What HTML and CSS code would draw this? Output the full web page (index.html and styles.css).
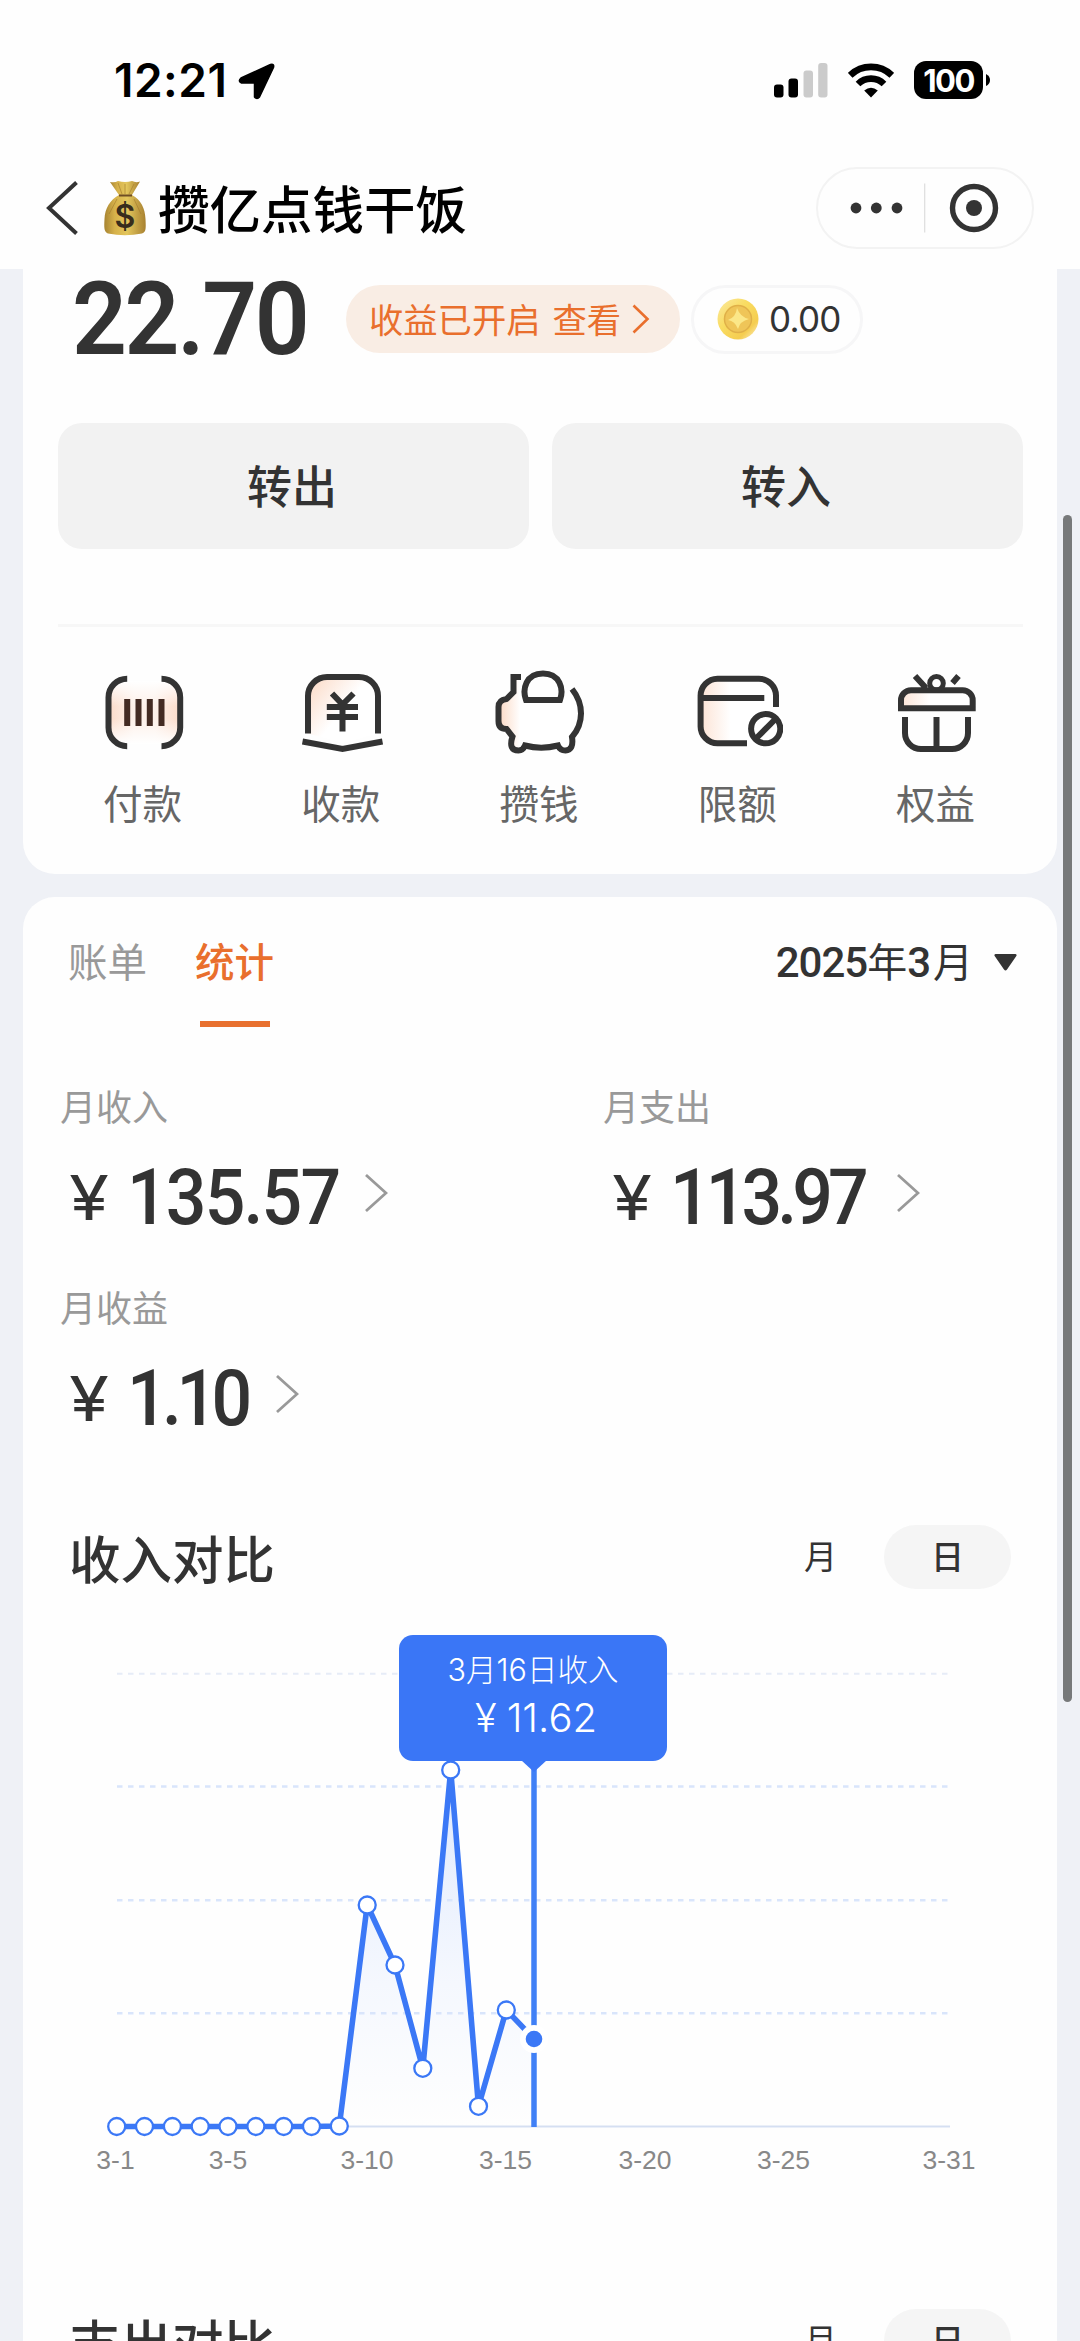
FILE: index.html
```html
<!DOCTYPE html>
<html lang="zh-CN">
<head>
<meta charset="utf-8">
<title>攒亿点钱干饭</title>
<link rel="stylesheet" href="styles.css">
</head>
<body>
<div class="screen">
  <header class="top">
    <div class="status">
      <span class="clock">12:21</span>
      <svg class="loc" width="37" height="37" viewBox="0 0 37 37"><path d="M3 15 32.500 1.500Q36.500 .5 35.500 4.500L21.500 34Q19 37 16.500 34V20H3.500Q-.5 18.500 3 15Z" stroke="#000" stroke-width="1.500" stroke-linejoin="round"/></svg>
      <svg class="signal" width="54" height="35" viewBox="0 0 54 35"><rect x="0" y="21.500" width="9.500" height="13" rx="3"/><rect x="14.500" y="15.500" width="9.500" height="19" rx="3"/><rect x="29.500" y="7.500" width="9.500" height="27" rx="3" fill="#cbcbcb"/><rect x="44.200" y="0" width="9.300" height="34.500" rx="3" fill="#cbcbcb"/></svg>
      <svg class="wifi" width="46" height="35" viewBox="0 0 46 35"><g fill="none" stroke="#000" stroke-width="6.600"><path d="M2.200 12.300A30 30 0 0 1 43.800 12.300"/><path d="M10 21A18.500 18.500 0 0 1 36 21"/></g><path d="M23 34.500 16.200 27.500Q23 21.800 29.800 27.500Z"/></svg>
      <span class="battery">100</span><svg class="nub" width="4" height="12" viewBox="0 0 4 12"><path d="M0 0Q4 2 4 6Q4 10 0 12Z"/></svg>
    </div>
    <nav class="nav">
      <svg class="back" width="32" height="54" viewBox="0 0 32 54"><path d="M30.500 1.500 3 27 30.500 52.500" fill="none" stroke="#333" stroke-width="4"/></svg>
      <svg class="bag" width="42" height="56" viewBox="0 0 42 56">
        <defs><linearGradient id="gold" x1="0" x2="1"><stop offset="0" stop-color="#a78432"/><stop offset=".25" stop-color="#d6b14a"/><stop offset=".55" stop-color="#e3c65c"/><stop offset="1" stop-color="#a88131"/></linearGradient></defs>
        <path d="M6 2Q11 3 14 1Q21 3 28 1Q32 3 36 1.500L28 15H15Z" fill="url(#gold)"/>
        <path d="M15 15H28C37 20 41 28 41.500 39C42 49 42 52 38 53.500Q21 57 4 53.500C0 52 0 48 .5 39C1 28 6 20 15 15Z" fill="url(#gold)"/>
        <path d="M15 15.500H28" stroke="#6e4d24" stroke-width="2"/>
        <path d="M14 3 18 14M21 4V14M30 4 25 14M13 19 5 34M30 19 37 34" stroke="#a17a2b" stroke-width="1" fill="none" opacity=".6"/>
        <text x="21" y="48" text-anchor="middle" class="dollar">$</text>
      </svg>
      <h1 class="title">攒亿点钱干饭</h1>
      <div class="capsule">
        <svg width="214" height="78" viewBox="0 0 214 78"><g fill="#333"><circle cx="38" cy="39" r="5.400"/><circle cx="58.300" cy="39" r="5.400"/><circle cx="79" cy="39" r="5.400"/><circle cx="156" cy="39" r="8"/></g><path d="M106.700 14.500V63.500" stroke="#ddd" stroke-width="1.200"/><circle cx="156" cy="39" r="21.500" fill="none" stroke="#333" stroke-width="5.400"/></svg>
      </div>
    </nav>
  </header>

  <section class="card account">
    <div class="balance">
      <span class="total">22.70</span>
      <a class="earn"><span>收益已开启</span><span>查看</span><svg width="18" height="30" viewBox="0 0 18 30"><path d="M1.500 1.500 15.500 15 1.500 28.500" fill="none" stroke="#e96f2d" stroke-width="2.600"/></svg></a>
      <a class="coin">
        <svg width="42" height="42" viewBox="0 0 42 42"><defs><linearGradient id="coinface" x1="0" y1="0" x2="1" y2="1"><stop offset="0" stop-color="#fbe9a0"/><stop offset=".4" stop-color="#f9dc62"/><stop offset=".75" stop-color="#f5cd50"/><stop offset="1" stop-color="#fdf3cf"/></linearGradient></defs><circle cx="21" cy="21" r="20.500" fill="url(#coinface)"/><circle cx="21" cy="21" r="13.500" fill="#efc558" stroke="#e0b048" stroke-width="1.500"/><path d="M20 10Q23 19 32 21Q23 23 21 31Q18 23 11 22Q19 19 20 10Z" fill="#fbe788"/></svg>
        <span>0.00</span>
      </a>
    </div>
    <div class="actions"><button>转出</button><button>转入</button></div>
    <hr class="rule">
    <ul class="services">
      <li>
        <svg class="ico" viewBox="0 0 90 90"><defs><linearGradient id="pg" x1="0" x2="1"><stop offset="0" stop-color="#fbdccb"/><stop offset=".35" stop-color="#fdf1ea"/><stop offset=".65" stop-color="#fdf1ea"/><stop offset="1" stop-color="#fbdccb"/></linearGradient><linearGradient id="pm" x1="0" y1="0" x2="0" y2="1"><stop offset="0" stop-color="#fff"/><stop offset=".4" stop-color="#fff" stop-opacity="0"/><stop offset=".6" stop-color="#fff" stop-opacity="0"/><stop offset="1" stop-color="#fff"/></linearGradient></defs><rect x="11" y="14" width="69" height="63" rx="14" fill="url(#pg)" stroke="none"/><rect x="11" y="14" width="69" height="63" rx="14" fill="url(#pm)" stroke="none"/><path d="M28.200 11.700A18.700 18.700 0 0 0 9.500 30.400V60.500A18.700 18.700 0 0 0 28.200 79.200M62.500 11.700A18.700 18.700 0 0 1 81.200 30.400V60.500A18.700 18.700 0 0 1 62.500 79.200"/><path d="M28.200 32V59M39.500 32V59M50.800 32V59M62.500 32V59" stroke="#432b23"/></svg>
        <span>付款</span>
      </li>
      <li>
        <svg class="ico" viewBox="0 0 90 90"><defs><linearGradient id="rg" x1="0" y1="0" x2=".8" y2=".6"><stop offset="0" stop-color="#fbd8c3"/><stop offset=".7" stop-color="#fff"/></linearGradient></defs><path d="M11 66.500V29A19 19 0 0 1 30 10H62A19 19 0 0 1 81 29V66.500L46 76Z" fill="url(#rg)" stroke="none"/><path d="M11 66.500V29A19 19 0 0 1 30 10H62A19 19 0 0 1 81 29V66.500M5.500 74.500 45.500 82 85.500 74.500"/><path d="M35 26.500 45.500 37.500 56.500 26.500M29.800 40H61M29.800 50H61M45.500 37V64.500"/></svg>
        <span>收款</span>
      </li>
      <li>
        <svg class="ico" viewBox="0 0 90 90"><defs><linearGradient id="sg" x1="0" x2="1"><stop offset="0" stop-color="#fbd8c3"/><stop offset=".3" stop-color="#fff"/></linearGradient></defs><path d="M18 11V25L11 32Q3.500 33 3.500 40V55Q3.500 62 11 62.500L17 70V82H76V22L64 34H30V11Z" fill="url(#sg)" stroke="none"/><path d="M26 10H18.500V25L11.500 32Q3.500 33 3.500 40V54Q3.500 62 11.500 62L17.500 69.500Q13 83.500 23.500 83.500Q28 83.500 30 78.500Q46 83 63 78.500Q65 83.500 70.500 83.500Q79 83 77 70C89 56 89 37 77 22M31 33C27 22 31 6.500 48 6.500S69 22 65 33Z"/></svg>
        <span>攒钱</span>
      </li>
      <li>
        <svg class="ico" viewBox="0 0 90 90"><defs><linearGradient id="lg" x1="0" x2="1"><stop offset="0" stop-color="#fce4d6"/><stop offset=".4" stop-color="#fff"/></linearGradient></defs><rect x="8" y="12" width="74" height="64" rx="16" fill="url(#lg)" stroke="none"/><path d="M83 40V29A17 17 0 0 0 66 11.700H24.500A17 17 0 0 0 7.600 29V59A17 17 0 0 0 24.500 76.300H54M8 31H71.300"/><circle cx="72.700" cy="61.700" r="20" fill="#fff" stroke="none"/><circle cx="72.700" cy="61.700" r="14.600"/><path d="M62.500 72 83 51.500"/></svg>
        <span>限额</span>
      </li>
      <li>
        <svg class="ico" viewBox="0 0 90 90"><rect x="10" y="23" width="71" height="18" rx="8" fill="url(#lg)" stroke="none"/><path d="M10 41.300V33.300A10 10 0 0 1 20 23.300H71.700A10 10 0 0 1 81.700 33.300V41.300ZM14 50V66A16 16 0 0 0 30 82H61A16 16 0 0 0 77 66V50M45.500 50V82M24 9 35 21M67.500 9 61.500 16"/><circle cx="45.500" cy="16.300" r="6.800" stroke-width="5"/></svg>
        <span>权益</span>
      </li>
    </ul>
  </section>

  <section class="card report">
    <div class="tabs">
      <a class="tab">账单</a>
      <a class="tab active">统计</a>
      <div class="month"><b>2025</b><span>年</span><b>3</b><span class="yue">月</span><svg width="23" height="17" viewBox="0 0 23 17"><path d="M1.500 0H21.500Q23.500 .5 22 2.500L13 15.500Q11.500 17.500 10 15.500L1 2.500Q-.5 .5 1.500 0Z" fill="#333"/></svg></div>
    </div>
    <div class="stats">
      <div class="stat income"><p>月收入</p><div class="amount"><i>¥</i><b>135.57</b><svg class="more" viewBox="0 0 24 40"><path d="M2 2 22 20 2 38"/></svg></div></div>
      <div class="stat expense"><p>月支出</p><div class="amount"><i>¥</i><b>113.97</b><svg class="more" viewBox="0 0 24 40"><path d="M2 2 22 20 2 38"/></svg></div></div>
      <div class="stat profit"><p>月收益</p><div class="amount"><i>¥</i><b>1.10</b><svg class="more" viewBox="0 0 24 40"><path d="M2 2 22 20 2 38"/></svg></div></div>
    </div>
    <div class="heading"><h2>收入对比</h2><span class="opt">月</span><span class="opt on">日</span></div>
    <div class="chart">
      <svg width="1034" height="720" viewBox="0 0 1034 720">
        <defs><linearGradient id="area" x1="0" y1="0" x2="0" y2="1"><stop offset="0" stop-color="#dfe9fd"/><stop offset=".6" stop-color="#f5f8fe"/><stop offset="1" stop-color="#fefefe"/></linearGradient></defs>
        <path d="M316.300 537 344.200 316 372 376 399.800 479.300 427.700 181 455.500 517.300 483.300 421 511.100 450V537Z" fill="url(#area)"/>
        <g stroke="#d9e5fb" stroke-width="2.500" stroke-dasharray="5.500 5.500"><path d="M94 84.700H925" stroke="#e6ecf7" stroke-width="2"/><path d="M94 197.500H925"/><path d="M94 311.300H925"/><path d="M94 424.300H925"/></g>
        <path d="M94 537.500H927" stroke="#d5dff2" stroke-width="2"/>
        <path d="M511 178V538" stroke="#4080f6" stroke-width="5.500"/>
        <path d="M93.700 537.500H288.500L316.300 537 344.200 316 372 376 399.800 479.300 427.700 181 455.500 517.300 483.300 421 511.100 450" fill="none" stroke="#3b78f6" stroke-width="5.600" stroke-linejoin="round"/>
        <g fill="#fff" stroke="#3b78f6" stroke-width="2.300"><circle cx="93.700" cy="537.500" r="8.500"/><circle cx="121.500" cy="537.500" r="8.500"/><circle cx="149.400" cy="537.500" r="8.500"/><circle cx="177.200" cy="537.500" r="8.500"/><circle cx="205" cy="537.500" r="8.500"/><circle cx="232.900" cy="537.500" r="8.500"/><circle cx="260.700" cy="537.500" r="8.500"/><circle cx="288.500" cy="537.500" r="8.500"/><circle cx="316.300" cy="537" r="8.500"/><circle cx="344.200" cy="316" r="8.500"/><circle cx="372" cy="376" r="8.500"/><circle cx="399.800" cy="479.300" r="8.500"/><circle cx="427.700" cy="181" r="8.500"/><circle cx="455.500" cy="517.300" r="8.500"/><circle cx="483.300" cy="421" r="8.500"/></g>
        <circle cx="511" cy="450" r="14" fill="#fff"/><circle cx="511" cy="450" r="8.300" fill="#3b78f6"/>
        <g class="axis"><text x="92.500" y="580">3-1</text><text x="205" y="580">3-5</text><text x="344" y="580">3-10</text><text x="482.500" y="580">3-15</text><text x="622" y="580">3-20</text><text x="760.500" y="580">3-25</text><text x="926" y="580">3-31</text></g>
      </svg>
      <div class="tip"><span>3月16日收入</span><strong><i>¥</i>11.62</strong></div>
    </div>
    <div class="heading"><h2>支出对比</h2><span class="opt">月</span><span class="opt on">日</span></div>
  </section>
  <div class="scrollbar"></div>
</div>
</body>
</html>
```
FILE: styles.css
```css
* { box-sizing: border-box; margin: 0; padding: 0; }
body { background: #eff1f6; color: #333; font-family: "Noto Sans CJK SC", sans-serif; }
.screen { position: relative; width: 1080px; height: 2341px; overflow: hidden; }
svg { display: block; flex: none; }
i { font-style: normal; }
.top { background: #fefefe; height: 269px; }
.status { height: 146px; padding: 14px 90px 0 114px; display: flex; align-items: center; color: #000; }
.clock { width: 124px; font: 600 46px/50px Inter, sans-serif; letter-spacing: .5px; white-space: nowrap; }
.loc { margin-top: 2px; }
.signal { margin-left: auto; margin-right: 20px; }
.wifi { margin-right: 20px; }
.battery { width: 69px; height: 38px; border-radius: 12px; background: #000; color: #fff; font: 700 31px/39px Inter, sans-serif; letter-spacing: -1.5px; text-align: center; }
.nub { margin-left: 3px; }
.nav { height: 123px; padding: 0 46px; display: flex; align-items: center; }
.bag { margin-left: 26px; }
.dollar { font: 600 32px Inter, sans-serif; fill: #382d1c; }
.title { margin: -2px 0 0 12px; font-size: 51.500px; line-height: 60px; font-weight: 500; color: #000; }
.capsule { margin-left: auto; border: 2px solid #f3f3f3; border-radius: 41px; }

.card { margin: 0 23px; background: #fefefe; }
.account { height: 605px; border-radius: 0 0 32px 32px; padding: 0 34.500px; }
.balance { height: 100px; display: flex; align-items: center; }
.total { width: 274.500px; margin-left: 14px; font: 600 102px/100px Roboto, sans-serif; letter-spacing: -2.500px; transform: scaleX(.943); transform-origin: left; }
.earn { width: 334px; height: 68px; padding-left: 23px; border-radius: 34px; background: #f9ede4; color: #e96f2d; display: flex; align-items: center; gap: 12px; font-size: 34.300px; line-height: 40px; }
.earn span { margin-top: -3px; }
.earn svg { margin-left: -1px; }
.coin { margin-left: 11px; width: 172px; height: 69px; padding-left: 23px; border: 3px solid #f6f6f7; border-radius: 35px; display: flex; align-items: center; gap: 10px; font: 400 35px/40px Inter, sans-serif; letter-spacing: -.7px; }
.actions { margin-top: 54px; display: grid; grid-template-columns: 1fr 1fr; gap: 23px; }
.actions button { height: 126px; border: 0; border-radius: 24px; background: #f2f2f2; color: #333; font: 500 45px/60px "Noto Sans CJK SC", sans-serif; padding: 0 2px 2px 0; }
.rule { margin-top: 75px; border: 0; height: 3px; background: #f7f7f7; }
.services { list-style: none; margin: 40px -13px 0; display: grid; grid-template-columns: repeat(5, 1fr); justify-items: center; font-size: 39.500px; line-height: 44px; color: #666; }
.services span { display: block; margin: 23px 2px 0 0; text-align: center; }
.ico { width: 90px; height: 90px; fill: none; stroke: #333; stroke-width: 6; }

.report { margin-top: 23px; height: 1600px; border-radius: 32px 32px 0 0; }
.tabs { height: 130px; padding: 41px 40px 0 45px; display: flex; gap: 48px; }
.tab { font-size: 39.500px; line-height: 44px; color: #999; }
.tab.active { color: #e96f2d; font-weight: 500; }
.tab.active::after { content: ""; display: block; width: 70px; height: 6px; margin: 39px auto 0; background: #e8702f; }
.month { margin-left: auto; height: 44px; display: flex; align-items: center; font-size: 40px; line-height: 44px; }
.month b { font: 500 42px/44px Roboto, sans-serif; letter-spacing: -1px; margin-top: 6px; }
.month .yue { margin-left: 3px; }
.month svg { margin-left: 21px; margin-top: 4px; }
.stats { margin-top: 56px; padding-left: 37px; display: grid; grid-template-columns: 543px 1fr; row-gap: 52px; }
.stat p { font-size: 36px; line-height: 44px; color: #999; }
.amount { height: 70px; margin-top: 36px; margin-bottom: -1px; display: flex; align-items: center; }
.amount i { width: 67px; padding-left: 8px; font: 400 62px/70px Inter, sans-serif; transform: scaleX(1.16); transform-origin: left; }
.amount b { font: 500 77px/70px Roboto, sans-serif; transform: scaleX(.93); transform-origin: left; white-space: nowrap; }
.income b { width: 211px; letter-spacing: -2px; }
.expense b { width: 200px; letter-spacing: -5.300px; }
.profit b { width: 122px; letter-spacing: -6px; }
.more { width: 24px; height: 40px; margin: -10px 0 0 26px; fill: none; stroke: #999; stroke-width: 2.800; }
.heading { height: 64px; padding: 0 46px; display: flex; align-items: center; }
.stats + .heading { margin-top: 92px; }
.heading h2 { margin-right: auto; font-size: 51.500px; line-height: 60px; font-weight: 500; }
.opt { width: 127px; height: 64px; border-radius: 32px; text-align: center; font-size: 33px; line-height: 60px; }
.opt.on { background: #f5f5f5; font-weight: 500; }
.chart { position: relative; height: 720px; }
.axis { font: 26.500px "Liberation Sans", sans-serif; fill: #888; text-anchor: middle; }
.tip { position: absolute; left: 376px; top: 46px; width: 268px; height: 126px; border-radius: 14px; background: #3a76f6; color: #fff; padding-top: 13px; display: flex; flex-direction: column; align-items: center; font: 300 30.500px/44px Inter, "Noto Sans CJK SC", sans-serif; }
.tip strong { font: 300 40px/52px Inter, sans-serif; margin-left: 6px; }
.tip i { margin-right: 10px; }
.tip::after { content: ""; position: absolute; left: 122px; top: 125px; border: solid transparent; border-width: 12px 13px 0; border-top-color: #3a76f6; }
.scrollbar { position: absolute; left: 1063px; top: 515px; width: 9px; height: 1187px; border-radius: 5px; background: #77797a; }
```
